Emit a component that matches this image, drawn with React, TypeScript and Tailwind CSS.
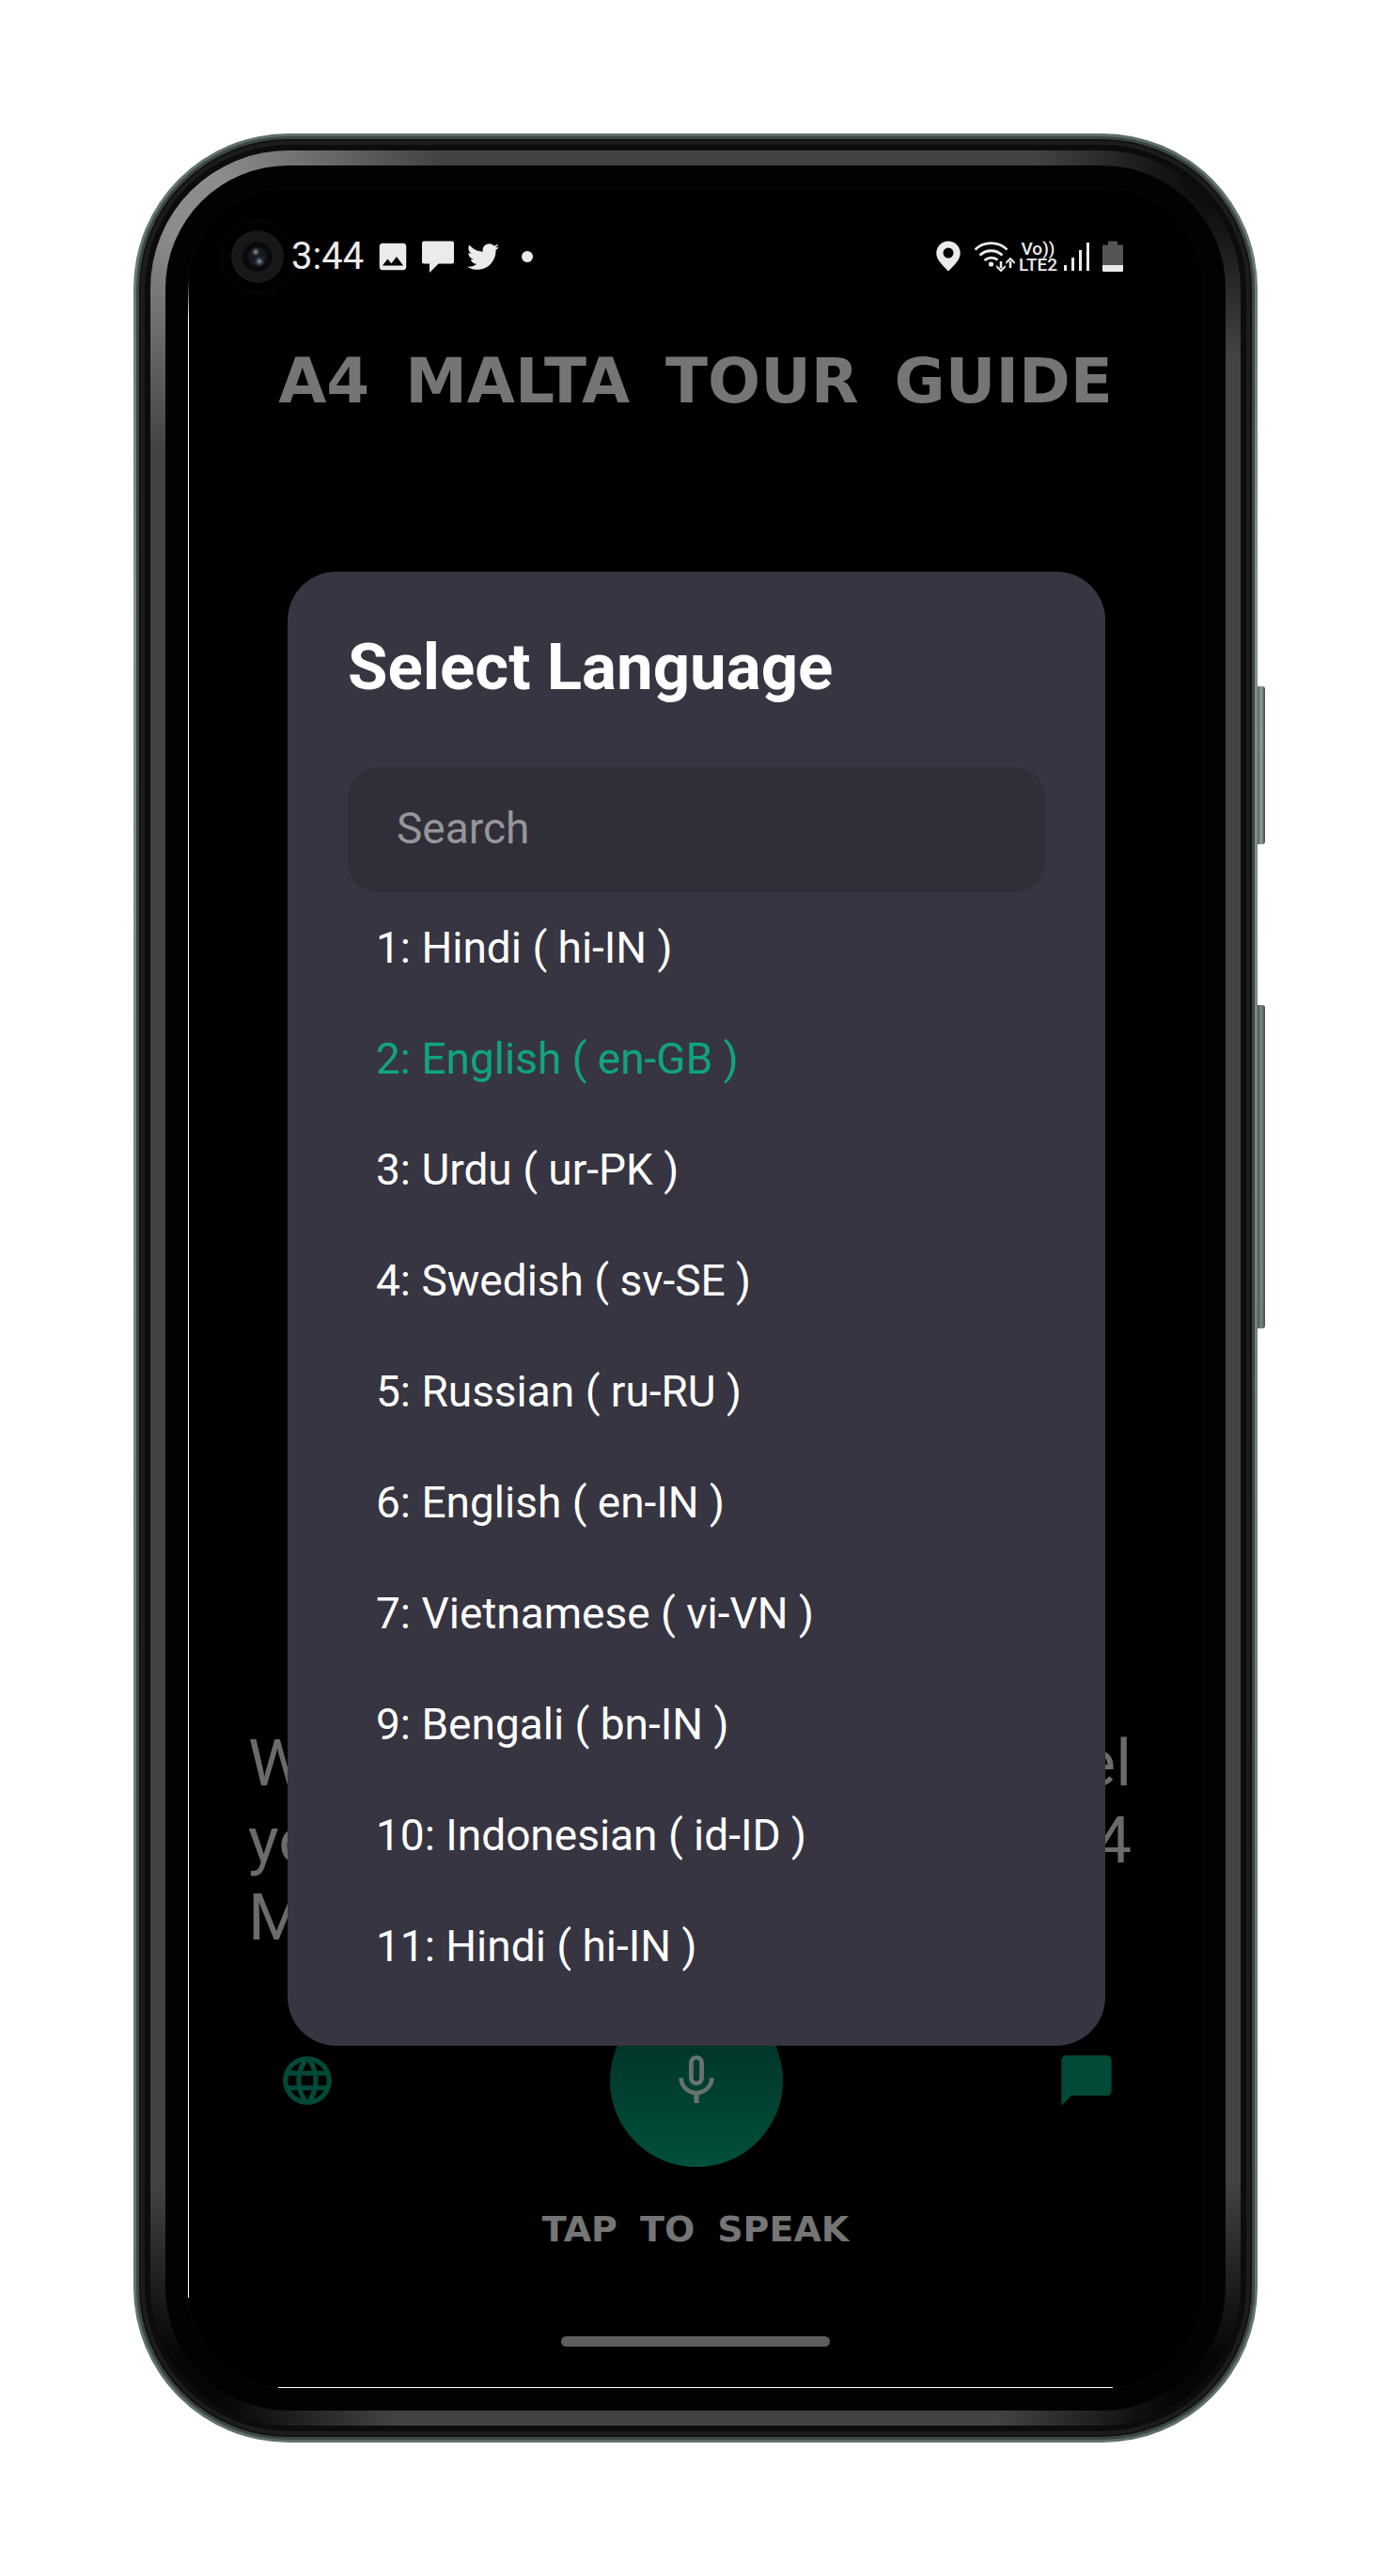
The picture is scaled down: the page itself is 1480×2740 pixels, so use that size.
import { useState } from "react";
import { MdChatBubble, MdLanguage, MdMicNone, MdPhoto } from "react-icons/md";
import { FaTwitter } from "react-icons/fa";

const languages = [
  { id: 1, name: "Hindi", code: "hi-IN" },
  { id: 2, name: "English", code: "en-GB" },
  { id: 3, name: "Urdu", code: "ur-PK" },
  { id: 4, name: "Swedish", code: "sv-SE" },
  { id: 5, name: "Russian", code: "ru-RU" },
  { id: 6, name: "English", code: "en-IN" },
  { id: 7, name: "Vietnamese", code: "vi-VN" },
  { id: 9, name: "Bengali", code: "bn-IN" },
  { id: 10, name: "Indonesian", code: "id-ID" },
  { id: 11, name: "Hindi", code: "hi-IN" },
];

function Camera() {
  return (
    <svg viewBox="0 0 80 80" className="size-20 shrink-0" aria-hidden="true">
      <defs>
        <radialGradient id="glintA">
          <stop offset="0" stopColor="#a3abb3" />
          <stop offset="1" stopColor="#0a0b10" stopOpacity="0" />
        </radialGradient>
        <radialGradient id="glintB">
          <stop offset="0" stopColor="#8fa3b3" />
          <stop offset="1" stopColor="#0a0b10" stopOpacity="0" />
        </radialGradient>
      </defs>
      <circle cx="40" cy="40" r="38.5" fill="#000" stroke="#0b0b0b" />
      <circle cx="40" cy="40" r="28" fill="#17181a" />
      <circle cx="40" cy="40" r="16" fill="#0a0a0d" />
      <circle cx="40" cy="40" r="10" fill="#151a22" />
      <circle cx="38" cy="35" r="6" fill="url(#glintA)" />
      <circle cx="42" cy="45" r="7" fill="url(#glintB)" />
    </svg>
  );
}

function ChatIcon() {
  return (
    <svg viewBox="0 0 34 34" className="ml-3 size-[34px]" fill="currentColor" aria-hidden="true">
      <path d="M2 0.5h30a2 2 0 0 1 2 2v20a2 2 0 0 1-2 2H17.500L8 34v-9.500H2a2 2 0 0 1-2-2v-20a2 2 0 0 1 2-2z" />
    </svg>
  );
}

function PinIcon() {
  return (
    <svg viewBox="0 0 26 34" className="ml-auto h-[34px] w-[26px]" fill="currentColor" aria-hidden="true">
      <path
        fillRule="evenodd"
        d="M13 0.500A12.700 12.700 0 0 0 0.300 13.200C0.300 20 5 24 13 32.500C21 24 25.700 20 25.700 13.200A12.700 12.700 0 0 0 13 0.500zM13 7.500a5.500 5.500 0 1 1 0 11a5.500 5.500 0 1 1 0-11z"
      />
    </svg>
  );
}

function WifiIcon() {
  return (
    <svg viewBox="0 0 44 34" className="ml-3.5 h-[34px] w-11" fill="none" stroke="currentColor" aria-hidden="true">
      <path d="M1.500 9.500a24.500 24.500 0 0 1 34 0M6.500 15.500a17.500 17.500 0 0 1 24 0M11.500 21a10.500 10.500 0 0 1 14-0.500" strokeWidth="2.800" />
      <circle cx="18.500" cy="25" r="2.600" fill="currentColor" stroke="none" />
      <path d="M29 22v7M39 29v-7" strokeWidth="2.600" />
      <path d="M24.500 26.500L29 30.500l4.500-4v2.200L29 33l-4.500-4.300zM34.500 24.500l4.500-4 4.500 4v-2.200L39 18l-4.500 4.300z" fill="currentColor" strokeWidth="0.600" />
    </svg>
  );
}

function SignalIcon() {
  return (
    <svg viewBox="0 0 28 32" className="ml-[7px] h-8 w-7" fill="currentColor" aria-hidden="true">
      <rect x="0" y="25" width="3" height="6" />
      <rect x="8" y="17" width="3" height="14" />
      <rect x="16" y="9" width="3" height="22" />
      <rect x="24" y="1" width="3" height="30" />
    </svg>
  );
}

function BatteryIcon() {
  return (
    <svg viewBox="0 0 22 34" className="ml-[13px] h-[34px] w-[22px]" aria-hidden="true">
      <path d="M6 0.500h10v4h5q1 0 1 1V26H0V5.500q0-1 1-1h5z" fill="#545454" />
      <path d="M0 26h22v6q0 1-1 1H1q-1 0-1-1z" fill="#ebebeb" />
    </svg>
  );
}

function StatusBar() {
  return (
    <div className="flex items-center pr-[85px] pl-[34px] text-[#ebebeb]">
      <Camera />
      <span className="-ml-1 text-[40px] leading-none">3:44</span>
      <MdPhoto className="ml-3 size-[38px]" />
      <ChatIcon />
      <FaTwitter className="ml-3.5 size-[34px]" />
      <span className="ml-6 size-3 rounded-full bg-[#ebebeb]" />
      <PinIcon />
      <WifiIcon />
      <span className="ml-1 flex flex-col items-center text-[19px] leading-[17px] font-medium">
        <span>Vo))</span>
        <span>LTE2</span>
      </span>
      <SignalIcon />
      <BatteryIcon />
    </div>
  );
}

function LanguageDialog() {
  const [selected, setSelected] = useState(2);
  const [query, setQuery] = useState("");
  const shown = languages.filter((l) => l.name.toLowerCase().includes(query.toLowerCase()));
  return (
    <section
      role="dialog"
      aria-labelledby="dialog-title"
      className="absolute top-[408px] right-[104px] left-[106px] min-h-[1568px] rounded-[52px] bg-[#363541] px-16 pt-[60px] pb-[46px]"
    >
      <h2 id="dialog-title" className="text-[69px] leading-[84px] font-bold text-white">
        Select Language
      </h2>
      <input
        type="text"
        aria-label="Search"
        placeholder="Search"
        value={query}
        onChange={(e) => setQuery(e.target.value)}
        className="mt-16 block h-[133px] w-full rounded-[32px] bg-[#302f39] px-[52px] pb-1 text-[46px] text-white outline-none placeholder:text-[#969699]"
      />
      <ul className="pl-[30px]">
        {shown.map((l) => (
          <li key={l.id}>
            <button
              type="button"
              aria-pressed={l.id === selected}
              onClick={() => setSelected(l.id)}
              className={`flex h-[118px] w-full items-center text-left text-[46px] ${
                l.id === selected ? "text-[#10a37f]" : "text-white"
              }`}
            >
              {l.id}: {l.name} ( {l.code} )
            </button>
          </li>
        ))}
      </ul>
    </section>
  );
}

function Words({ text }: { text: string }) {
  return text.split(" ").map((word) => <span key={word}>{word} </span>);
}

function Screen() {
  return (
    <main className="relative flex min-h-[2340px] flex-col rounded-[105px] bg-black ring-1 ring-[#080808]">
      <div className="absolute top-24 bottom-24 left-0 w-px bg-linear-to-b from-transparent via-white via-2% to-white" />
      <div className="absolute inset-x-24 bottom-0 h-px bg-white" />
      <div className="pt-[33px]">
        <StatusBar />
      </div>
      <h1 className="mt-[53px] flex justify-center gap-[38px] font-['DejaVu_Sans'] text-[66px] leading-[80px] font-bold text-[#757575]">
        <Words text="A4 MALTA TOUR GUIDE" />
      </h1>
      <div className="mt-auto pr-[76px] pl-[64px] text-[69px] leading-[82px] text-[#6b6b6b]">
        <p className="flex justify-between">
          <span>Welcome</span>
          <span>travel</span>
        </p>
        <p className="flex justify-between">
          <span>your</span>
          <span>A4</span>
        </p>
        <p>Malta</p>
      </div>
      <div className="mt-10 flex items-center justify-between pr-[92px] pl-24 text-[#004a37]">
        <button type="button" aria-label="Language">
          <MdLanguage className="size-[62px]" />
        </button>
        <button
          type="button"
          aria-label="Tap to speak"
          className="flex size-[184px] items-center justify-center rounded-full bg-linear-to-b from-[#022c22] to-[#00503c] text-[#66736f]"
        >
          <MdMicNone className="size-16" />
        </button>
        <button type="button" aria-label="Chat">
          <MdChatBubble className="size-16" />
        </button>
      </div>
      <p className="mt-[42px] flex justify-center gap-6 font-['DejaVu_Sans'] text-[38px] leading-[48px] font-bold text-[#757575]">
        <Words text="TAP TO SPEAK" />
      </p>
      <div className="mx-auto mt-[90px] mb-11 h-[11px] w-[286px] rounded-full bg-[#5e5e5e]" />
      <LanguageDialog />
    </main>
  );
}

export default function App() {
  return (
    <div className="min-h-screen bg-white p-[142px] font-[Roboto,sans-serif]">
      <div className="relative rounded-[165px] bg-linear-to-b from-[#5f6f69] via-[#81918a] via-20% to-[#5f6f69] p-[3px]">
        <div className="absolute top-[588px] left-full h-[168px] w-2 rounded-r-[3px] bg-linear-to-r from-[#55615b] via-[#93a29b] to-[#3f4a45]" />
        <div className="absolute top-[927px] left-full h-[344px] w-2 rounded-r-[3px] bg-linear-to-r from-[#47524d] via-[#7d8c85] to-[#3f4a45]" />
        <div className="rounded-[162px] bg-[#3c4642] p-[3px]">
          <div className="rounded-[159px] border-2 border-[#101215] bg-[#1c1c1c] p-1">
            <div className="rounded-[153px] bg-[#0c0c0c] p-1.5">
              <div className="rounded-[147px] bg-[radial-gradient(circle_at_50px_60px,#8c8c8c_0,#8c8c8c_40px,transparent_260px),radial-gradient(circle_at_100%_0,#0c0c0c_60px,transparent_220px),radial-gradient(circle_at_0_100%,#060606_80px,transparent_260px),radial-gradient(circle_at_100%_100%,#060606_80px,transparent_260px)] bg-[#434343] p-4">
                <div className="rounded-[131px] bg-[#020202] p-6">
                  <Screen />
                </div>
              </div>
            </div>
          </div>
        </div>
      </div>
    </div>
  );
}
